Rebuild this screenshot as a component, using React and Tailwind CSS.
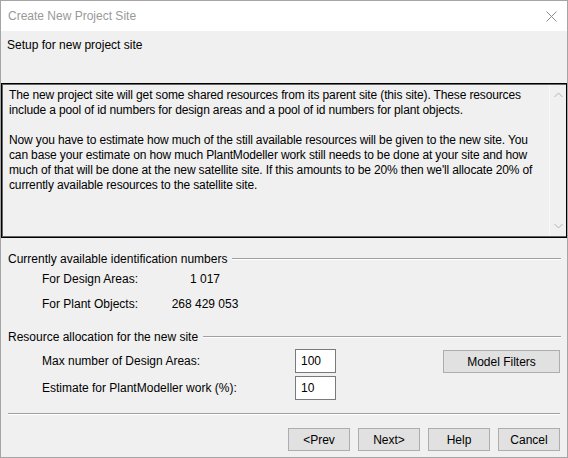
import React from 'react';

const font = { fontFamily: '"Liberation Sans", Arial, sans-serif' };

function Chevron({ up }) {
  return (
    <svg width="9" height="6" viewBox="0 0 9 6" className="block">
      <path d={up ? 'M0.5 5 L4.5 1 L8.5 5' : 'M0.5 1 L4.5 5 L8.5 1'} fill="none" stroke="#b4b4b4" strokeWidth="1" />
    </svg>
  );
}

function GroupHeader({ children }) {
  return (
    <div className="flex items-center h-[15px] pl-[7px] pr-[6px]">
      <span className="whitespace-nowrap">{children}</span>
      <div className="flex-1 ml-[5px] h-[2px] border-t border-[#a0a0a0] border-b-white border-b" />
    </div>
  );
}

function Btn({ children, className = '' }) {
  return (
    <button className={`h-[23px] bg-[#e1e1e1] border border-[#adadad] text-black text-[12px] ${className}`}>
      {children}
    </button>
  );
}

export default function App() {
  return (
    <div className="w-[568px] h-[458px] border border-[#a5a5a5] bg-[#f0f0f0] flex flex-col text-[12px] text-black" style={font}>
      {/* title bar */}
      <div className="h-[30px] bg-white flex items-center justify-between pl-[7px] pr-[10px]">
        <span className="text-[#999999] text-[12px]">Create New Project Site</span>
        <svg width="11" height="11" viewBox="0 0 11 11">
          <path d="M0.5 0.5 L10.5 10.5 M10.5 0.5 L0.5 10.5" stroke="#8c8c8c" strokeWidth="1" />
        </svg>
      </div>

      <div className="pt-[7px] pl-[6px] leading-[15px]">Setup for new project site</div>

      {/* description box */}
      <div className="mt-[30px] h-[155px] border border-black flex">
        <div className="flex-1 flex border border-[#646464] border-r-0">
          <div className="flex-1 pl-[6px] pt-[3px] leading-[15px] tracking-[-0.14px]">
            The new project site will get some shared resources from its parent site (this site). These resources<br />
            include a pool of id numbers for design areas and a pool of id numbers for plant objects.<br />
            <br />
            Now you have to estimate how much of the still available resources will be given to the new site. You<br />
            can base your estimate on how much PlantModeller work still needs to be done at your site and how<br />
            much of that will be done at the new satellite site. If this amounts to be 20% then we'll allocate 20% of<br />
            currently available resources to the satellite site.
          </div>
          <div className="w-[17px] bg-[#f0f0f0] border-l border-[#f8f8f8] flex flex-col items-center justify-between py-[7px]">
            <Chevron up />
            <Chevron />
          </div>
        </div>
      </div>

      <div className="mt-[13px]">
        <GroupHeader>Currently available identification numbers</GroupHeader>
      </div>
      <div className="mt-[6px] pl-[41px] flex flex-col gap-[10px] leading-[15px]">
        <div className="flex">
          <span className="w-[123px]">For Design Areas:</span>
          <span className="w-[80px] text-center">1 017</span>
        </div>
        <div className="flex">
          <span className="w-[123px]">For Plant Objects:</span>
          <span className="w-[80px] text-center">268 429 053</span>
        </div>
      </div>

      <div className="mt-[17px]">
        <GroupHeader>Resource allocation for the new site</GroupHeader>
      </div>

      <div className="mt-[5px] flex pl-[41px] pr-[7px]">
        <div className="flex flex-col gap-[3px]">
          <div className="flex items-center h-[24px]">
            <span className="w-[253px]">Max number of Design Areas:</span>
            <div className="w-[41px] h-[24px] bg-white border border-[#7a7a7a] pl-[5px] flex items-center">100</div>
          </div>
          <div className="flex items-center h-[24px]">
            <span className="w-[253px]">Estimate for PlantModeller work (%):</span>
            <div className="w-[41px] h-[24px] bg-white border border-[#7a7a7a] pl-[5px] flex items-center">10</div>
          </div>
        </div>
        <div className="flex-1 flex justify-end pt-[1px]">
          <Btn className="w-[117px] h-[22px]">Model Filters</Btn>
        </div>
      </div>

      <div className="mt-[13px] mx-[7px] h-[2px] border-t border-[#a0a0a0] border-b border-b-white" />

      <div className="mt-[13px] flex justify-end gap-[8px] pr-[7px]">
        <Btn className="w-[62px]">&lt;Prev</Btn>
        <Btn className="w-[62px]">Next&gt;</Btn>
        <Btn className="w-[62px]">Help</Btn>
        <Btn className="w-[62px]">Cancel</Btn>
      </div>
    </div>
  );
}
